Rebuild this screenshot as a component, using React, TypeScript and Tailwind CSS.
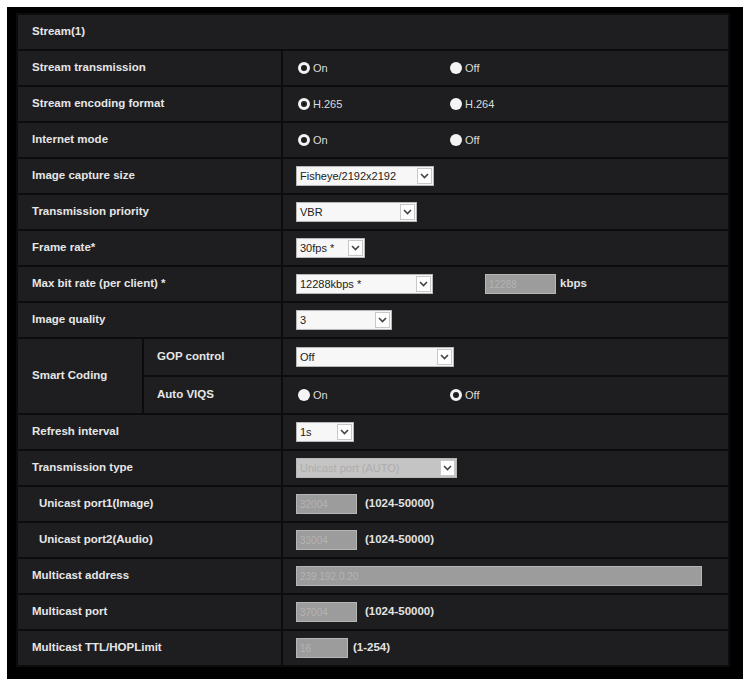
import type { ReactNode } from "react";

function Radio({ checked, label }: { checked: boolean; label: string }) {
  return (
    <span className="flex items-center gap-[3px]">
      {checked ? (
        <span className="h-[12px] w-[12px] rounded-full border-[3px] border-[#f2f2f2] bg-[#1e1e21]" />
      ) : (
        <span className="h-[12px] w-[12px] rounded-full bg-[#f4f4f4]" />
      )}
      <span className="text-[11px] text-[#dcdcdc]">{label}</span>
    </span>
  );
}

function RadioPair({ first, second, checkedFirst }: { first: string; second: string; checkedFirst: boolean }) {
  return (
    <div className="flex items-center pl-[2px]">
      <div className="w-[152px]">
        <Radio checked={checkedFirst} label={first} />
      </div>
      <Radio checked={!checkedFirst} label={second} />
    </div>
  );
}

function Select({ value, width, disabled = false }: { value: string; width: string; disabled?: boolean }) {
  return (
    <div
      className={`flex h-[20px] items-center justify-between border border-[#b8b8b8] ${
        disabled ? "bg-[#c4c4c4]" : "bg-[#f7f7f7]"
      } ${width}`}
    >
      <span className={`pl-[3px] text-[11px] ${disabled ? "text-[#adadad]" : "text-[#222]"}`}>{value}</span>
      <span className="mr-[1px] flex h-[16px] w-[15px] items-center justify-center border border-[#c8c8c8] bg-white">
        <svg width="9" height="6" viewBox="0 0 9 6">
          <path d="M1 1l3.5 3.5L8 1" fill="none" stroke="#444" strokeWidth="1.6" />
        </svg>
      </span>
    </div>
  );
}

function GrayInput({ value, width }: { value: string; width: string }) {
  return (
    <div className={`flex h-[20px] items-center border border-[#b5b5b5] bg-[#9c9c9c] pl-[3px] ${width}`}>
      <span className="text-[10px] text-[#b4b4b4]">{value}</span>
    </div>
  );
}

function Range({ text }: { text: string }) {
  return <span className="text-[11.5px] font-bold text-[#e2e2e2]">{text}</span>;
}

function Row({ label, indent = false, children }: { label: string; indent?: boolean; children: ReactNode }) {
  return (
    <tr className="h-[34px]">
      <td colSpan={2} className={`bg-[#1e1e21] ${indent ? "pl-[21px]" : "pl-[14px]"} text-[11.5px] font-bold text-[#e6e6e6]`}>
        {label}
      </td>
      <td className="bg-[#1e1e21] pl-[13px]">{children}</td>
    </tr>
  );
}

export default function App() {
  return (
    <div className="min-h-[679px] bg-white pl-[7px] pr-[3px] pt-[7px]" style={{ fontFamily: '"Liberation Sans", Arial, sans-serif' }}>
      <div className="h-[672px] bg-black pl-[9px] pr-[11px] pt-[6px]">
        <table className="w-[714px] border-separate border-spacing-[2px] bg-[#0c0c0e]">
          <colgroup>
            <col className="w-[124px]" />
            <col className="w-[137px]" />
            <col />
          </colgroup>
          <tbody>
            <tr className="h-[34px]">
              <td colSpan={3} className="bg-[#1e1e21] pl-[14px] text-[11.5px] font-bold text-[#e6e6e6]">
                Stream(1)
              </td>
            </tr>
            <Row label="Stream transmission">
              <RadioPair first="On" second="Off" checkedFirst />
            </Row>
            <Row label="Stream encoding format">
              <RadioPair first="H.265" second="H.264" checkedFirst />
            </Row>
            <Row label="Internet mode">
              <RadioPair first="On" second="Off" checkedFirst />
            </Row>
            <Row label="Image capture size">
              <Select value="Fisheye/2192x2192" width="w-[138px]" />
            </Row>
            <Row label="Transmission priority">
              <Select value="VBR" width="w-[121px]" />
            </Row>
            <Row label="Frame rate*">
              <Select value="30fps *" width="w-[69px]" />
            </Row>
            <Row label="Max bit rate (per client) *">
              <div className="flex items-center">
                <Select value="12288kbps *" width="w-[137px]" />
                <div className="ml-[52px]">
                  <GrayInput value="12288" width="w-[71px]" />
                </div>
                <span className="ml-[4px] text-[11.5px] font-bold text-[#e2e2e2]">kbps</span>
              </div>
            </Row>
            <Row label="Image quality">
              <Select value="3" width="w-[96px]" />
            </Row>
            <tr className="h-[36px]">
              <td rowSpan={2} className="bg-[#1e1e21] pl-[14px] text-[11.5px] font-bold text-[#e6e6e6]">
                Smart Coding
              </td>
              <td className="bg-[#1e1e21] pl-[13px] text-[11.5px] font-bold text-[#e6e6e6]">GOP control</td>
              <td className="bg-[#1e1e21] pl-[13px]">
                <Select value="Off" width="w-[158px]" />
              </td>
            </tr>
            <tr className="h-[36px]">
              <td className="bg-[#1e1e21] pl-[13px] text-[11.5px] font-bold text-[#e6e6e6]">Auto VIQS</td>
              <td className="bg-[#1e1e21] pl-[13px]">
                <RadioPair first="On" second="Off" checkedFirst={false} />
              </td>
            </tr>
            <Row label="Refresh interval">
              <Select value="1s" width="w-[58px]" />
            </Row>
            <Row label="Transmission type">
              <Select value="Unicast port (AUTO)" width="w-[161px]" disabled />
            </Row>
            <Row label="Unicast port1(Image)" indent>
              <div className="flex items-center gap-[8px]">
                <GrayInput value="32004" width="w-[61px]" />
                <Range text="(1024-50000)" />
              </div>
            </Row>
            <Row label="Unicast port2(Audio)" indent>
              <div className="flex items-center gap-[8px]">
                <GrayInput value="33004" width="w-[61px]" />
                <Range text="(1024-50000)" />
              </div>
            </Row>
            <Row label="Multicast address">
              <GrayInput value="239.192.0.20" width="w-[406px]" />
            </Row>
            <Row label="Multicast port">
              <div className="flex items-center gap-[8px]">
                <GrayInput value="37004" width="w-[61px]" />
                <Range text="(1024-50000)" />
              </div>
            </Row>
            <Row label="Multicast TTL/HOPLimit">
              <div className="flex items-center gap-[5px]">
                <GrayInput value="16" width="w-[52px]" />
                <Range text="(1-254)" />
              </div>
            </Row>
          </tbody>
        </table>
      </div>
    </div>
  );
}
